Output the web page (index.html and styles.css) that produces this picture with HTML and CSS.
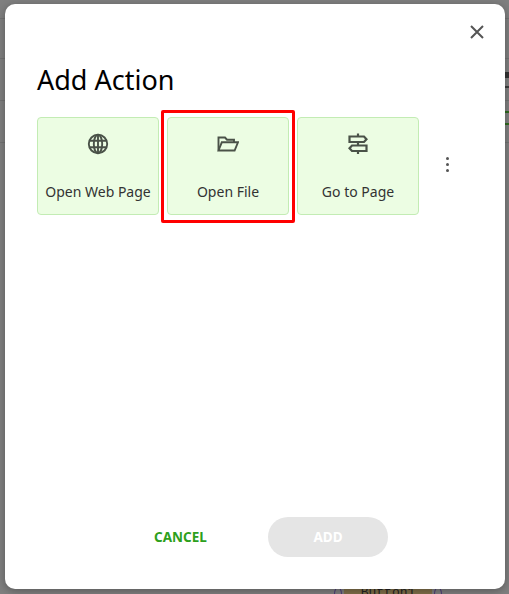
FILE: index.html
```html
<!DOCTYPE html>
<html lang="en">
<head>
    <meta charset="UTF-8">
    <meta name="viewport" content="width=device-width, initial-scale=1.0">
    <title>Add Action</title>
    <link rel="stylesheet" href="styles.css">
</head>
<body>
    <!-- dimmed editor behind the dialog -->
    <div class="backdrop-line line-top"></div>
    <div class="backdrop-line line-mid"></div>
    <div class="backdrop-line line-low"></div>
    <div class="backdrop-line line-side"></div>
    <div class="backdrop-mark mark-dark"></div>
    <div class="backdrop-mark mark-thin"></div>
    <div class="backdrop-mark mark-green"></div>
    <div class="backdrop-chip">Button1</div>

    <div class="dialog">
        <button class="close-btn" aria-label="Close">
            <svg width="16" height="16" viewBox="0 0 16 16"><path d="M2 2l12 12M14 2L2 14" /></svg>
        </button>
        <h1 class="title">Add Action</h1>

        <div class="actions">
            <div class="action-card">
                <svg class="action-icon" width="22" height="22" viewBox="0 0 22 22">
                    <circle cx="11" cy="11" r="9.2" />
                    <ellipse cx="11" cy="11" rx="4.2" ry="9.2" />
                    <path d="M2.3 7.8h17.4M2.3 14.2h17.4M11 1.8v18.4" />
                </svg>
                <span class="action-label">Open Web Page</span>
            </div>
            <div class="action-card highlighted">
                <svg class="action-icon" width="22" height="22" viewBox="0 0 22 22">
                    <path d="M1.5 17.5V4.5h6.500l2 2.200h7v2.600" />
                    <path d="M1.5 17.5l3.300-8.200H21l-3.400 8.200z" />
                </svg>
                <span class="action-label">Open File</span>
            </div>
            <div class="action-card">
                <svg class="action-icon icon-heavy" width="22" height="22" viewBox="0 0 22 22">
                    <path d="M2.500 3.500h14.500l2.500 2.700L17 9H2.500zM19.500 12.500H5L2.500 15.200 5 18h14.500zM11 0.500v3M11 9v3.500M11 18v3" />
                </svg>
                <span class="action-label">Go to Page</span>
            </div>
            <div class="more-dots">
                <span></span><span></span><span></span>
            </div>
        </div>

        <div class="footer">
            <button class="btn-cancel">CANCEL</button>
            <button class="btn-add" disabled>ADD</button>
        </div>
    </div>
</body>
</html>
```

FILE: styles.css
```css
html, body {
    height: 100%;
}

body {
    margin: 0;
    padding: 4px 4px 5px 5px;
    box-sizing: border-box;
    background-color: #7f7f7f;
    font-family: 'Noto Sans', 'Open Sans', sans-serif;
    overflow: hidden;
}

/* things showing through around the dialog */
.backdrop-line {
    position: absolute;
    left: 0;
    right: 0;
    height: 1px;
    background-color: #727272;
}

.line-top { top: 18px; }
.line-mid { top: 58px; }
.line-low { top: 100px; }
.line-side { top: 142px; }

.backdrop-mark {
    position: absolute;
    left: 505px;
    width: 4px;
}

.mark-dark {
    top: 72px;
    height: 6px;
    background-color: #333;
}

.mark-thin {
    top: 86px;
    height: 2px;
    background-color: #3c3c3c;
}

.mark-green {
    top: 111px;
    height: 14px;
    border-top: 2px solid #2f6a1f;
    border-bottom: 2px solid #2f6a1f;
    box-sizing: border-box;
}

.backdrop-chip {
    position: absolute;
    left: 344px;
    top: 580px;
    width: 88px;
    height: 14px;
    background-color: #7f6f4a;
    color: #222;
    font-family: 'Liberation Mono', monospace;
    font-size: 13px;
    line-height: 14px;
    padding-top: 6px;
    text-align: center;
}

/* the small connector rings either side of the chip */
.backdrop-chip::before,
.backdrop-chip::after {
    content: '';
    position: absolute;
    top: 7px;
    width: 6px;
    height: 12px;
    border: 1px solid #4b3a78;
    border-radius: 50%;
}

.backdrop-chip::before { left: -10px; }
.backdrop-chip::after { right: -10px; }

.dialog {
    position: relative;
    height: 100%;
    background-color: #fff;
    border-radius: 10px;
    box-shadow: 0 2px 8px rgba(0, 0, 0, 0.3);
    padding: 0 32px;
    box-sizing: border-box;
    display: flex;
    flex-direction: column;
}

.close-btn {
    position: absolute;
    top: 20px;
    right: 20px;
    width: 16px;
    height: 16px;
    padding: 0;
    border: none;
    background: none;
}

.close-btn svg {
    display: block;
    fill: none;
    stroke: #555;
    stroke-width: 2;
}

.title {
    margin: 58px 0 0;
    font-size: 27px;
    line-height: 36px;
    font-weight: 400;
    color: #000;
}

.actions {
    display: flex;
    gap: 8px;
    margin-top: 19px;
}

.action-card {
    position: relative;
    width: 122px;
    height: 98px;
    box-sizing: border-box;
    border: 1px solid #c3ecb4;
    border-radius: 4px;
    background-color: #ecfde3;
    display: flex;
    flex-direction: column;
    align-items: center;
    padding-top: 15px;
}

/* red annotation box from the screenshot */
.highlighted::after {
    content: '';
    position: absolute;
    left: -7px;
    right: -7px;
    top: -8px;
    bottom: -9px;
    border: 3px solid #f00;
    border-radius: 2px;
}

.action-icon {
    display: block;
    fill: none;
    stroke: #4a5248;
    stroke-width: 1.900;
}

.icon-heavy {
    stroke-width: 2.200;
}

.action-label {
    margin-top: 27px;
    font-size: 14px;
    line-height: 20px;
    color: #333;
    white-space: nowrap;
}

.more-dots {
    display: flex;
    flex-direction: column;
    gap: 3px;
    align-self: center;
    margin-left: 19px;
    margin-bottom: 4px;
}

.more-dots span {
    width: 3px;
    height: 3px;
    border-radius: 50%;
    background-color: #555;
}

.footer {
    margin-top: auto;
    margin-bottom: 32px;
    display: flex;
    align-items: center;
    padding-left: 117px;
}

.footer button {
    border: none;
    font-family: inherit;
    font-size: 13.5px;
    font-weight: 700;
    padding: 0;
}

.btn-cancel {
    width: 53px;
    margin-right: 61px;
    background: none;
    color: #2da01c;
    white-space: nowrap;
}

.btn-add {
    width: 120px;
    height: 40px;
    border-radius: 20px;
    background-color: #e5e5e5;
    color: #fff;
}
```
